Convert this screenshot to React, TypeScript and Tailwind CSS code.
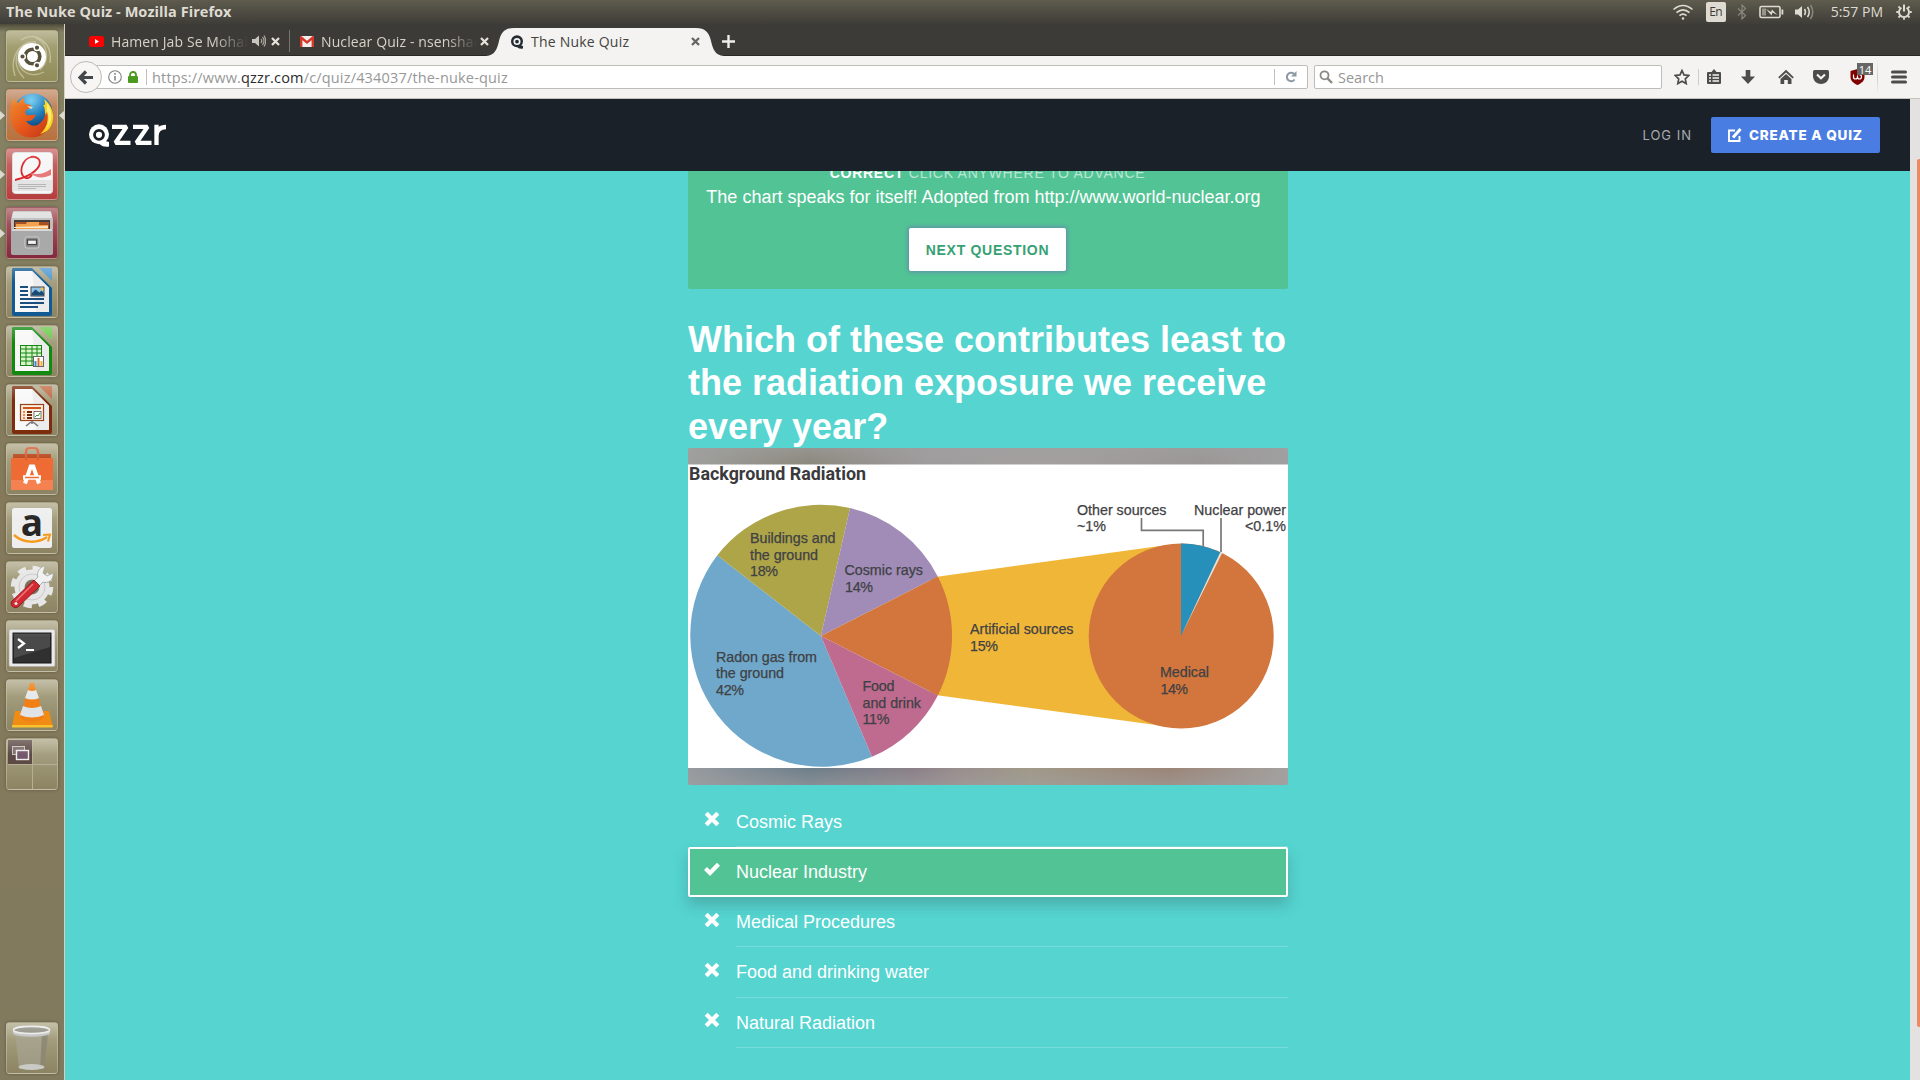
import React, { ReactNode } from "react";

const UI = "font-['Open_Sans','Noto_Sans',sans-serif]";

/* ---------- Launcher ---------- */

function Tile({ tint, children }: { tint: string; children: ReactNode }) {
  return (
    <div
      className={`relative h-[52px] w-[52px] shrink-0 overflow-hidden rounded-[4px] border border-white/25 shadow-[0_0_3px_rgba(50,45,25,0.45)] ${tint}`}
    >
      <svg viewBox="0 0 52 52" className="-m-px h-[52px] w-[52px]">
        {children}
      </svg>
      <div className="absolute inset-x-0 top-0 h-4 bg-linear-to-b from-white/25 to-transparent" />
    </div>
  );
}

function LibreDoc({ dark, light, children }: { dark: string; light: string; children: ReactNode }) {
  return (
    <>
      <path d="M7 2h19l20 20v26a2 2 0 0 1-2 2H8a2 2 0 0 1-2-2V3z" fill={dark} />
      <path d="M9 5h17l17 17v24H9z" fill="#f8f8f8" />
      <path d="M26 5l17 17V46H30z" fill="#ececec" />
      <path d="M33 2h13v13z" fill={light} />
      {children}
    </>
  );
}

const GLASS = "bg-linear-to-b from-[#b0aa8b] to-[#8b8361]";

function Launcher() {
  return (
    <aside className="relative flex w-[65px] shrink-0 flex-col gap-[7px] border-r border-[#d8d2bd] bg-linear-to-b from-[#858365] via-[#84795a] to-[#817a5e] pt-[6px] pb-[6px] pl-[6px]">
      <div className="absolute inset-x-0 top-0 h-2 bg-linear-to-b from-[#4d4a39] to-transparent" />
      <Tile tint="bg-linear-to-b from-[#aaa67c] to-[#918c58]">
        <g fill="none" stroke="#d2cfb0" strokeWidth="1.3" opacity=".7">
          <path d="M9 46C3 27 14 10 30 12" />
          <path d="M15 10c16-10 32 4 29 23" />
          <path d="M18 48C6 36 8 20 22 13" />
          <path d="M38 42c-14 7-26-1-26-14" />
          <path d="M30 8c11 5 15 22 4 32" />
        </g>
        <circle cx="26" cy="27" r="14" fill="#fff" />
        <circle cx="26.5" cy="26.5" r="7.3" fill="none" stroke="#57533b" strokeWidth="3.6" />
        <g fill="#57533b" stroke="#fff" strokeWidth="1.4">
          <circle cx="16.5" cy="26.5" r="2.8" />
          <circle cx="31" cy="17.7" r="2.8" />
          <circle cx="31" cy="35.3" r="2.8" />
        </g>
      </Tile>
      <Tile tint="bg-linear-to-b from-[#c3906c] to-[#b8713d]">
        <defs>
          <radialGradient id="globe" cx=".45" cy=".2" r=".8">
            <stop offset="0" stopColor="#6fcdf2" />
            <stop offset=".5" stopColor="#1f79b8" />
            <stop offset="1" stopColor="#0b2e5e" />
          </radialGradient>
          <linearGradient id="fox" x1="0" y1="0" x2="1" y2="1">
            <stop offset="0" stopColor="#ef8a2a" />
            <stop offset=".5" stopColor="#e65a1c" />
            <stop offset="1" stopColor="#c33316" />
          </linearGradient>
        </defs>
        <circle cx="27" cy="24" r="19.5" fill="url(#globe)" />
        <path
          d="M7 10l5 4c2-3 5-5 6-5 0 3 0 5 2 6l5 1-1 3-4 2c-1 2-1 4 1 5 3 1 6-1 9 0l-2 3c-2 3-5 3-8 3 3 5 9 6 13 3 6-4 7-11 6-17 8 9 7 21-2 27-9 6-22 4-28-4C2 32 4 19 7 10z"
          fill="url(#fox)"
        />
        <path d="M38 10c8 6 12 17 7 27-3 5-7 7-11 8 7-6 9-14 7-23l-1 4c-2-3 0-6-3-10 3 1 2-3 1-6z" fill="#fbd41c" />
        <path d="M41 14c6 8 6 19-1 26 4-9 3-13 1-17z" fill="#fff3a0" opacity=".7" />
        <path d="M21 17l6 1-2 2z" fill="#fbe0c0" />
      </Tile>
      <Tile tint="bg-linear-to-b from-[#c96e6c] to-[#b53e3e]">
        <rect x="6.5" y="4.5" width="40" height="41" rx="3" fill="#f6f6f6" stroke="#ddd" />
        <path d="M7 32h39v11H7z" fill="#e4e4e4" />
        <path d="M9 32c6-1 20-6 24-14 3-7-3-10-8-9-8 2-12 13-8 19 3 4 7 2 9-1" fill="none" stroke="#d9292c" strokeWidth="1.800" />
        <path d="M24 25c8 2 14 1 21-4v6c-8 4-15 3-21-2z" fill="#e77b7b" />
        <path d="M12 36.500h28M12 38.500h28M12 40.500h18" stroke="#aaa" strokeWidth=".8" />
      </Tile>
      <Tile tint="bg-linear-to-b from-[#ad6066] to-[#84283c]">
        <path d="M7 5q0-1 1-1h36q1 0 1 1l2 7v35H5V12z" fill="#bdbdbd" />
        <path d="M7 5h38l1 6H6z" fill="#dedede" />
        <rect x="8" y="13" width="36" height="10" fill="#3b3431" />
        <path d="M9 15h34v8H9z" fill="#a94f22" />
        <path d="M10 17h10l1-2h12v7H10zM12 18h30v4H10z" fill="#f2a14c" />
        <path d="M8 20l34-1v2H8z" fill="#fbe6c6" />
        <path d="M5 22h42v24q0 2-2 2H7q-2 0-2-2z" fill="#a9a9a9" />
        <path d="M6 22h40v2H6z" fill="#d8d8d8" />
        <rect x="19" y="30" width="14" height="11" rx="2" fill="#8b8b8b" stroke="#d0d0d0" />
        <rect x="21.500" y="33" width="9" height="4.500" fill="#f4f4f4" stroke="#444" strokeWidth="1.200" />
      </Tile>
      <Tile tint={GLASS}>
        <LibreDoc dark="#115a93" light="#4f98cf">
          <path d="M14 21h8M14 25h8M14 29h8M14 33h24M14 37h24M14 41h18" stroke="#1a4f80" strokeWidth="2" />
          <rect x="25" y="21" width="13" height="9" fill="#8fc3ea" stroke="#444" />
          <path d="M25.500 29.500v-2l4-4 4 3 2-2 2.500 3v2z" fill="#1b4a70" />
          <circle cx="36" cy="23" r="1.600" fill="#f5c542" />
        </LibreDoc>
      </Tile>
      <Tile tint={GLASS}>
        <LibreDoc dark="#128a12" light="#6acb4c">
          <rect x="14.500" y="20.500" width="21" height="20" fill="#d7f5c7" stroke="#158515" />
          <path d="M14 24h22M14 28h22M14 32h22M14 36h22M20 20v21M26 20v21M31 20v21" stroke="#158515" />
          <rect x="27.500" y="31.500" width="10" height="10" fill="#fff" stroke="#666" />
          <path d="M28.500 36h2v5h-2z" fill="#338ad0" />
          <path d="M31.500 33h2v8h-2z" fill="#e2632a" />
          <path d="M34.500 36h2v5h-2z" fill="#e8b52c" />
        </LibreDoc>
      </Tile>
      <Tile tint={GLASS}>
        <LibreDoc dark="#7d2d0c" light="#c16a45">
          <rect x="14.500" y="20.500" width="23" height="16" fill="#fdeee0" stroke="#94431b" strokeWidth="1.200" />
          <path d="M17 24h18" stroke="#d0571b" strokeWidth="2" />
          <path d="M17 28h2M17 31h2M17 34h2" stroke="#e98a4e" strokeWidth="1.800" />
          <path d="M21 28h5M21 31h5M21 34h5" stroke="#6d2a0d" strokeWidth="1.800" />
          <rect x="28" y="27.500" width="7" height="7" fill="#fff" stroke="#555" strokeWidth=".8" />
          <path d="M29 33l2-2 1 1 2-3" stroke="#2c9b3a" fill="none" />
          <path d="M26 37v3M25 38l-5 4M27 38l5 4" stroke="#777" strokeWidth="1.600" />
        </LibreDoc>
      </Tile>
      <Tile tint={GLASS}>
        <path d="M7 11h38v6H7z" fill="#b7491f" />
        <path d="M5 15h42v31q0 1-1 1H6q-1 0-1-1z" fill="#ee6c34" />
        <path d="M5 37h42v10H5z" fill="#f58150" />
        <path d="M20 17V9q0-4 4-4h4q4 0 4 4v8" fill="none" stroke="#d95c2e" strokeWidth="2.200" />
        <path d="M19 40.500l5.700-17h2.600l5.700 17" fill="none" stroke="#fff" strokeWidth="4" />
        <path d="M17 34.500h18" stroke="#fff" strokeWidth="4.500" />
        <path d="M19 34.500h14" stroke="#ee6c34" strokeWidth="1.400" />
      </Tile>
      <Tile tint={GLASS}>
        <rect x="6" y="6" width="40" height="40" rx="2.500" fill="#eeeeee" />
        <text x="26" y="33.500" textAnchor="middle" fontSize="37" fontWeight="700" fontFamily="Open Sans, sans-serif" fill="#262626">
          a
        </text>
        <path d="M8 33c9 8 23 9 33 2" fill="none" stroke="#f79a1c" strokeWidth="2.400" />
        <path d="M37 33l7-.5-2 7" fill="none" stroke="#f79a1c" strokeWidth="2" />
      </Tile>
      <Tile tint={GLASS}>
        <circle cx="26" cy="26" r="17.500" fill="none" stroke="#e6e6e6" strokeWidth="7.500" strokeDasharray="7.500 6.245" />
        <circle cx="26" cy="26" r="12.500" fill="none" stroke="#e6e6e6" strokeWidth="10" />
        <circle cx="26" cy="26" r="13" fill="none" stroke="#c9c9c9" />
        <circle cx="26" cy="26" r="7" fill="#77715f" />
        <path d="M27 21l5-5c-2-5 2-10 7-11l-2 7 4 3 6-3c1 7-5 11-10 9l-5 5z" fill="#f1f1f1" stroke="#9c9c9c" strokeWidth=".8" />
        <path d="M28 19l6 6-22 21q-3 2-6-1-2-3 0-5z" fill="#d22a33" stroke="#8c1319" strokeWidth=".8" />
        <path d="M27 23L10 40" stroke="#f0747a" strokeWidth="1.600" />
        <circle cx="10" cy="42.500" r="1.500" fill="#eee" />
      </Tile>
      <Tile tint={GLASS}>
        <rect x="3" y="9.500" width="46" height="37" rx="1.500" fill="#e9e9e9" stroke="#aaa" strokeWidth=".6" />
        <rect x="7" y="13" width="38" height="30" fill="#303030" stroke="#141414" />
        <path d="M8 14h36v13L8 38z" fill="#4a4a4a" />
        <path d="M12 19l6 4.500-6 4.500" fill="none" stroke="#fff" strokeWidth="2.200" />
        <path d="M20 30h8" stroke="#fff" strokeWidth="2" />
      </Tile>
      <Tile tint={GLASS}>
        <path d="M9 32h34l4 16H6z" fill="#f08b14" />
        <path d="M6 46h41l-.5 2.500H6z" fill="#f9c22c" />
        <path d="M24 4h4l10 34c-3 6-21 6-24 0z" fill="#f07f16" />
        <path d="M22 11q4 2 8 0l3 8q-7 3-14 0z" fill="#e6e9ec" />
        <path d="M17 27q9 4 18 0l3 9q-12 5-24 0z" fill="#dfe3e7" />
      </Tile>
      <Tile tint={GLASS}>
        <rect x="2" y="2" width="24" height="24" fill="#5d4a45" />
        <path d="M26.500 2v49M2 26.500h49" stroke="#b5af98" />
        <rect x="6.500" y="8.500" width="12" height="8" fill="#7a6b6b" stroke="#c9c2bd" />
        <rect x="10.500" y="12.500" width="12" height="9" fill="#75576b" stroke="#eee" strokeWidth="1.400" />
      </Tile>
      <div className="mt-auto">
        <Tile tint={GLASS}>
          <path d="M9 10h33l-4 36q-13 3-25 0z" fill="#a9a797" opacity=".6" />
          <path d="M36 12h6l-4 34-4 1z" fill="#77745f" opacity=".5" />
          <ellipse cx="25.500" cy="45" rx="13" ry="3" fill="#c9c9c6" />
          <path d="M7 8v3c0 5 37 5 37 0V8z" fill="#c4c4c4" />
          <ellipse cx="25.500" cy="8" rx="18" ry="3.600" fill="#918f84" stroke="#e9e9e9" strokeWidth="1.600" />
        </Tile>
      </div>
      <svg className="absolute inset-0 h-full w-[65px]" viewBox="0 0 65 1056">
        <path d="M0 87l5 4.500-5 4.500zM0 146l5 4.500-5 4.500zM0 205l5 4.500-5 4.500zM64 87l-5 4.500 5 4.500z" fill="#dcdad0" />
      </svg>
    </aside>
  );
}

/* ---------- System bar ---------- */

function SystemBar() {
  return (
    <header
      className={`flex h-6 shrink-0 items-center justify-between bg-linear-to-b from-[#5f5b4e] to-[#3e3d38] pr-2 pl-[6px] text-[#dfdbd2] ${UI}`}
    >
      <span className="text-[14.500px] leading-6 font-bold tracking-[0.06px]">The Nuke Quiz - Mozilla Firefox</span>
      <div className="flex h-6 items-center">
        <svg className="mr-[12px] h-[18px] w-[22px]" viewBox="0 0 22 18" fill="none" stroke="#dfdbd2" strokeWidth="1.600">
          <path d="M1.500 6.500q9.500-8 19 0M4.500 9.700q6.500-5.500 13 0M7.500 12.700q3.500-3 7 0" />
          <circle cx="11" cy="15.500" r="1.200" fill="#dfdbd2" stroke="none" />
        </svg>
        <span className="mr-[11px] flex h-5 w-5 items-center justify-center rounded-[2px] bg-[#dfdbd2] text-[12px] font-medium tracking-[-0.5px] text-[#3c3b37]">
          En
        </span>
        <svg className="mr-[12px] h-4 w-[10px]" viewBox="0 0 10 16" fill="none" stroke="#8a877f" strokeWidth="1.200">
          <path d="M1 4.500l7.500 7L5 15V1l3.500 3.500L1 11.500" />
        </svg>
        <svg className="mr-[11px] h-[14px] w-[25px]" viewBox="0 0 25 14">
          <rect x="1" y="1.500" width="20" height="11" rx="1.500" fill="none" stroke="#dfdbd2" strokeWidth="1.600" />
          <rect x="22.500" y="4.500" width="1.800" height="5" fill="#dfdbd2" />
          <rect x="3" y="3.500" width="4" height="7" fill="#98958c" />
          <path d="M7 4l5 3 1-2.500L18.500 10l-5-2.500-1 3z" fill="#dfdbd2" />
        </svg>
        <svg className="mr-[16px] h-4 w-[20px]" viewBox="0 0 20 16" fill="none" stroke="#dfdbd2" strokeWidth="1.500">
          <path d="M0 5.500h3l4-3.500v12l-4-3.500H0z" fill="#dfdbd2" stroke="none" />
          <path d="M9.500 5q2 3 0 6M12.500 3q3.500 5 0 10" />
          <path d="M15.500 1q4.500 7 0 14" stroke="#8a877f" />
        </svg>
        <span className="mr-[13px] text-[14px] leading-6">5:57 PM</span>
        <svg className="h-4 w-4" viewBox="0 0 16 16" fill="none" stroke="#dfdbd2">
          <path d="M5.500 3.800a5 5 0 1 0 5 0" strokeWidth="1.900" />
          <path d="M8 .5v7" strokeWidth="2" />
          <path d="M.3 8h2M13.700 8h2M8 13.500v2.200M2.500 2.500l1.600 1.600M13.500 2.500l-1.600 1.600M2.500 13.500l1.600-1.600M13.500 13.500l-1.600-1.600" strokeWidth="1.800" />
        </svg>
      </div>
    </header>
  );
}

/* ---------- Tabs ---------- */

function CloseX({ color }: { color: string }) {
  return (
    <svg className="h-[9px] w-[9px] shrink-0" viewBox="0 0 9 9">
      <path d="M1 1l7 7M8 1L1 8" stroke={color} strokeWidth="2.300" />
    </svg>
  );
}

function QMark({ className, color, hole }: { className: string; color: string; hole: string }) {
  return (
    <svg className={className} viewBox="0 0 20 23">
      <circle cx="10" cy="10.300" r="10" fill={color} />
      <path d="M9 15l11 3v4.500q-6 .8-9-2z" fill={color} />
      <circle cx="10" cy="10.800" r="4.500" fill="none" stroke={hole} strokeWidth="2.800" />
    </svg>
  );
}

function TabBar() {
  return (
    <div className={`flex h-8 shrink-0 items-center border-b border-[#2a2926] bg-[#3c3b37] pt-[3px] text-[14px] ${UI}`}>
      <div className="flex h-[22px] w-[225px] shrink-0 items-center border-r border-[#767570] pl-6 text-[#d6d2c8]">
        <svg className="mr-[7px] h-[11px] w-[15px] shrink-0" viewBox="0 0 15 11">
          <rect width="15" height="11" rx="2.500" fill="#f00" />
          <path d="M6 3l4 2.500L6 8z" fill="#fff" />
        </svg>
        <span className="w-[137px] shrink-0 overflow-hidden mask-r-from-75% tracking-[0.1px] whitespace-nowrap">Hamen Jab Se Mohabbat</span>
        <svg className="mr-[5px] ml-[4px] h-3 w-[14px] shrink-0" viewBox="0 0 14 12" fill="none" stroke="#c9c5bc" strokeWidth="1.200">
          <path d="M0 4h3l4-3.500v11L3 8H0z" fill="#c9c5bc" stroke="none" />
          <path d="M9 4q1.500 2 0 4M10.500 2q3 4 0 8M12 .5q3.500 5.500 0 11" opacity=".8" />
        </svg>
        <CloseX color="#e6e2da" />
      </div>
      <div className="flex w-[205px] shrink-0 items-center pl-[10px] text-[#d6d2c8]">
        <svg className="mr-[7px] h-[11px] w-[14px] shrink-0" viewBox="0 0 14 11">
          <rect width="14" height="11" rx="1" fill="#f2f0ec" />
          <path d="M1.200 11V1.500L7 6.500l5.800-5V11" fill="none" stroke="#d8382c" strokeWidth="2.400" />
        </svg>
        <span className="w-[156px] shrink-0 overflow-hidden mask-r-from-80% tracking-[0.1px] whitespace-nowrap">
          Nuclear Quiz - nsensharma
        </span>
        <span className="ml-[3px] flex">
          <CloseX color="#e6e2da" />
        </span>
      </div>
      <div className="relative -ml-[9px] flex h-[29px] w-[238px] shrink-0 items-center self-start text-[#44433f]">
        <svg className="absolute top-0 left-0 h-[29px] w-[238px]" viewBox="0 0 238 29">
          <path d="M0 29C9 28.500 11 22 13 14 15 5 19 1 28 1h182c9 0 13 4 15 13 2 8 4 14.500 13 15z" fill="#f4f3f1" />
        </svg>
        <div className="relative flex w-full items-center pl-[25px]">
          <QMark className="mr-[8px] h-[14px] w-3 shrink-0" color="#242b33" hole="#f4f3f1" />
          <span className="w-[160px] tracking-[0.22px]">The Nuke Quiz</span>
          <CloseX color="#66655f" />
        </div>
      </div>
      <svg className="-ml-[2px] h-[13px] w-[13px]" viewBox="0 0 13 13">
        <path d="M6.500 0v13M0 6.500h13" stroke="#f0eee9" strokeWidth="2.400" />
      </svg>
    </div>
  );
}

/* ---------- Toolbar ---------- */

function ToolIcon({ className, children }: { className: string; children: ReactNode }) {
  return (
    <span className={`flex h-full shrink-0 items-center justify-center ${className}`}>
      <svg className="h-4 w-4" viewBox="0 0 16 16" fill="#4c4c4c">
        {children}
      </svg>
    </span>
  );
}

function Toolbar() {
  return (
    <div className={`flex h-[43px] shrink-0 items-center border-b border-[#c6c3bd] bg-[#f4f3f1] pl-[5px] ${UI}`}>
      <div className="relative z-10 flex h-8 w-8 shrink-0 items-center justify-center rounded-full border border-[#bdbab5] bg-[#f7f6f5]">
        <svg className="h-[15px] w-[16px]" viewBox="0 0 16 15">
          <path d="M8 1.500L2 7.500l6 6M2.500 7.500H15" fill="none" stroke="#45484b" strokeWidth="3.200" />
        </svg>
      </div>
      <div className="-ml-[6px] flex h-6 w-[1212px] shrink-0 items-center rounded-r-[2px] border border-[#bfbdb9] bg-white pl-[11px]">
        <svg className="h-[14px] w-[14px]" viewBox="0 0 14 14">
          <circle cx="7" cy="7" r="6.300" fill="none" stroke="#80807e" strokeWidth="1.100" />
          <path d="M7 6v4.500M7 3v1.700" stroke="#80807e" strokeWidth="1.500" />
        </svg>
        <svg className="ml-[6px] h-3 w-[10px]" viewBox="0 0 10 12">
          <rect y="5" width="10" height="7" rx="1" fill="#4a9a20" />
          <path d="M2 6V4a3 3 0 0 1 6 0v2" fill="none" stroke="#4a9a20" strokeWidth="1.800" />
        </svg>
        <span className="ml-2 h-4 w-px bg-[#c2c0bc]" />
        <span className="mt-px ml-[5px] text-[14.500px] tracking-[0.170px] text-[#979797]">
          https://www.<span className="text-[#2c2c2c]">qzzr.com</span>/c/quiz/434037/the-nuke-quiz
        </span>
        <span className="ml-auto h-4 w-px bg-[#c2c0bc]" />
        <svg className="mr-[10px] ml-[10px] h-3 w-3" viewBox="0 0 12 12">
          <path d="M9.500 8.500A4.200 4.200 0 1 1 9 3" fill="none" stroke="#8c98a3" strokeWidth="2" />
          <path d="M11.500 0v5.500H6z" fill="#8c98a3" />
        </svg>
      </div>
      <div className="ml-[6px] flex h-6 w-[348px] shrink-0 items-center rounded-[2px] border border-[#bfbdb9] bg-white pl-1 text-[14.500px] text-[#969696]">
        <svg className="mr-[5px] h-[14px] w-[14px]" viewBox="0 0 14 14" fill="none" stroke="#8a8a88">
          <circle cx="5.500" cy="5.300" r="4" strokeWidth="1.800" />
          <path d="M8.500 8.300l4.500 4.700" strokeWidth="2.400" />
        </svg>
        <span className="mt-px">Search</span>
      </div>
      <ToolIcon className="ml-[4px] w-[32px]">
        <path d="M8 1.500l2 4.400 4.800.6-3.500 3.300.9 4.800L8 12.200l-4.200 2.400.9-4.800L1.200 6.500 6 5.900z" fill="none" stroke="#4c4c4c" strokeWidth="1.700" />
      </ToolIcon>
      <span className="h-4 w-px shrink-0 bg-[#cfcdc9]" />
      <ToolIcon className="w-[29px]">
        <path d="M2 3h3.500l2.500-3 2.500 3H14q1 0 1 1v10q0 1-1 1H2q-1 0-1-1V4q0-1 1-1z" />
        <path d="M3 6h2M3 9h2M3 12h2M6.500 6H13M6.500 9H13M6.500 12H13" stroke="#f4f3f1" strokeWidth="1.500" />
      </ToolIcon>
      <ToolIcon className="w-[40px]">
        <path d="M5.700 1h4.600v6.500H15L8 15 1 7.500h4.700z" />
      </ToolIcon>
      <ToolIcon className="w-[35px]">
        <path d="M8 .8l7.800 7.400-1.200 1.300L8 3.500 1.400 9.500.2 8.200z" />
        <path d="M8 5l5.500 5v5H9.800v-4H6.200v4H2.500v-5z" />
      </ToolIcon>
      <ToolIcon className="w-[36px]">
        <path d="M1.500 1h13Q16 1 16 2.500V7c0 5-4 8-8 8S0 12 0 7V2.500Q0 1 1.500 1z" />
        <path d="M4 5.500L8 9.300l4-3.800" fill="none" stroke="#f4f3f1" strokeWidth="2.200" />
      </ToolIcon>
      <span className="relative flex h-full w-[36px] shrink-0 items-center justify-center">
        <svg className="h-4 w-[15px]" viewBox="0 0 15 16">
          <path d="M7.500 0L14.500 2v6c0 4-3.500 6.500-7 8C4 14.500.5 12 .5 8V2z" fill="#800000" />
          <path d="M3.500 5.500v2.500q0 2 2 2t2-2V6.500M7.500 8q0 2 2 2t2-2.200-2-2.200" fill="none" stroke="#fff" strokeWidth="1.200" />
        </svg>
        <span className="absolute top-[7px] left-[18px] flex h-3 w-4 items-center justify-center bg-[#666] text-[11px] leading-none text-white">
          14
        </span>
      </span>
      <span className="ml-[2px] h-9 w-px shrink-0 bg-linear-to-b from-transparent via-[#cfcdc9] to-transparent" />
      <ToolIcon className="w-[42px]">
        <path d="M1.500 3h13M1.500 8h13M1.500 13h13" stroke="#4c4c4c" strokeWidth="3" strokeLinecap="round" />
      </ToolIcon>
    </div>
  );
}

/* ---------- Page ---------- */

function SiteHeader() {
  return (
    <div className="relative z-10 flex h-[72px] shrink-0 items-center bg-[#1b2129] pr-[30px] pl-[24px] font-['Inter','Roboto',sans-serif]">
      <QMark className="h-[23px] w-5 shrink-0" color="#fff" hole="#1b2129" />
      <svg className="ml-[3px] h-[23px] w-[54px] shrink-0" viewBox="0 0 54 23" fill="none" stroke="#fff" strokeWidth="4.300">
        <path d="M0 2.900h14.500L3.500 18.800H18.500M21 2.900h14.500L24.500 18.800H39.500" strokeLinejoin="bevel" />
        <path d="M44.500 21V.8M44.500 12c0-6 4-9 9.500-9" />
      </svg>
      <span className="mt-[2px] ml-auto text-[13px] tracking-[1px] text-[#a8abaf]">LOG IN</span>
      <button className="ml-[19px] flex h-9 w-[169px] items-center rounded-[2px] bg-[#4a7de2] pl-[17px] text-[13.500px] font-extrabold tracking-[0.8px] text-white">
        <svg className="mr-[7px] h-[14px] w-[14px] shrink-0" viewBox="0 0 14 14" fill="none" stroke="#fff" strokeWidth="1.900">
          <path d="M7 2.500H1V13h10.500V8" />
          <path d="M5 9.500L12.500 1" strokeWidth="3" />
        </svg>
        <span className="mt-px whitespace-nowrap">CREATE A QUIZ</span>
      </button>
    </div>
  );
}

function RadiationChart() {
  return (
    <svg className="block h-[337px] w-[600px] rounded-[2px]" viewBox="688 448 600 337">
      <defs>
        <linearGradient id="topBand">
          <stop offset="0" stopColor="#9fa09d" />
          <stop offset=".2" stopColor="#8b877b" />
          <stop offset=".4" stopColor="#9f9c9e" />
          <stop offset=".6" stopColor="#a3a09e" />
          <stop offset=".85" stopColor="#9b9696" />
          <stop offset="1" stopColor="#a09f9f" />
        </linearGradient>
        <linearGradient id="bottomBand">
          <stop offset="0" stopColor="#979b9f" />
          <stop offset=".2" stopColor="#6d7e8a" />
          <stop offset=".38" stopColor="#8c8088" />
          <stop offset=".45" stopColor="#998e8d" />
          <stop offset=".57" stopColor="#a09a89" />
          <stop offset=".8" stopColor="#9b8477" />
          <stop offset="1" stopColor="#a3a19f" />
        </linearGradient>
        <linearGradient id="fadeDown" x1="0" y1="0" x2="0" y2="1">
          <stop offset="0" stopColor="#a0a0a0" stopOpacity=".55" />
          <stop offset="1" stopColor="#a0a0a0" stopOpacity="0" />
        </linearGradient>
        <linearGradient id="fadeUp" x1="0" y1="1" x2="0" y2="0">
          <stop offset="0" stopColor="#a0a0a0" stopOpacity=".5" />
          <stop offset="1" stopColor="#a0a0a0" stopOpacity="0" />
        </linearGradient>
      </defs>
      <rect x="688" y="448" width="600" height="17" fill="url(#topBand)" />
      <rect x="688" y="448" width="600" height="17" fill="url(#fadeDown)" />
      <rect x="688" y="768" width="600" height="17" fill="url(#bottomBand)" />
      <rect x="688" y="768" width="600" height="17" fill="url(#fadeUp)" />
      <rect x="688" y="464.500" width="600" height="303.500" fill="#fff" />
      <path d="M930 577.700L1160 546v179.500L930 694.300z" fill="#f0b637" />
      <path d="M820.900 636L872 756.700A131.500 131.500 0 0 1 717.300 555.300z" fill="#6fa8cb" />
      <path d="M820.900 636L717.300 555.300A131.500 131.500 0 0 1 850 508z" fill="#aea448" />
      <path d="M820.900 636L850 508A131.500 131.500 0 0 1 937.800 576.500z" fill="#a08cb6" />
      <path d="M820.900 636L937.800 576.500A131.500 131.500 0 0 1 937.800 695.500z" fill="#d2763d" />
      <path d="M820.900 636L937.800 695.500A131.500 131.500 0 0 1 872 756.700z" fill="#be6b8f" />
      <circle cx="1181.200" cy="636" r="92.500" fill="#d2763d" />
      <path d="M1181 636V543.500A92.500 92.500 0 0 1 1220.500 552.300z" fill="#268fba" />
      <path d="M1181.200 635.500L1220.300 552.200l1.900.9z" fill="#e6e3dc" />
      <path d="M1141.500 518v12.300h61.700V547M1221 518v34" fill="none" stroke="#77777a" strokeWidth="1.700" />
      <g fontFamily="Liberation Sans, Arial, sans-serif" fontSize="14.300" fill="#3f4144" stroke="#3f4144" strokeWidth=".25">
        <text x="689" y="480" fontFamily="Roboto, sans-serif" fontSize="18.500" fontWeight="700" fill="#3a3a3d" stroke="none" textLength="177" lengthAdjust="spacingAndGlyphs">
          Background Radiation
        </text>
        <text x="750" y="543" textLength="85.500">Buildings and</text>
        <text x="750" y="559.500" textLength="68">the ground</text>
        <text x="750" y="576" textLength="28">18%</text>
        <text x="844.500" y="575" textLength="78.500">Cosmic rays</text>
        <text x="845" y="591.500" textLength="28">14%</text>
        <text x="716" y="661.500" textLength="101">Radon gas from</text>
        <text x="716" y="678" textLength="68">the ground</text>
        <text x="716" y="694.500" textLength="28">42%</text>
        <text x="862.500" y="691" textLength="32">Food</text>
        <text x="862.500" y="707.500" textLength="58.500">and drink</text>
        <text x="862.500" y="724" textLength="27">11%</text>
        <text x="970" y="634" textLength="103.500">Artificial sources</text>
        <text x="970" y="650.500" textLength="28">15%</text>
        <text x="1077" y="514.500" textLength="89.500">Other sources</text>
        <text x="1077" y="531" textLength="29">~1%</text>
        <text x="1194" y="514.500" textLength="92">Nuclear power</text>
        <text x="1245" y="531" textLength="41">&lt;0.1%</text>
        <text x="1160" y="677" textLength="49">Medical</text>
        <text x="1160.500" y="693.500" textLength="27.500">14%</text>
      </g>
    </svg>
  );
}

const ANSWERS = ["Cosmic Rays", "Nuclear Industry", "Medical Procedures", "Food and drinking water", "Natural Radiation"];

function AnswerMark({ correct }: { correct: boolean }) {
  return (
    <svg className="-mt-[5px] h-4 w-4 shrink-0" viewBox="0 0 16 16" fill="none" stroke="#fff" strokeWidth="4.200">
      {correct ? <path d="M1.500 7.500l4.500 4.500L14.500 3.300" /> : <path d="M2.200 2.200l11.600 11.600M13.800 2.200L2.200 13.800" />}
    </svg>
  );
}

function Answer({ label, correct }: { label: string; correct: boolean }) {
  return (
    <li
      className={
        correct
          ? "relative z-10 flex h-[50px] items-center rounded-[2px] border-2 border-white bg-[#52c394] pl-[14px] shadow-[0_8px_14px_rgba(50,90,90,0.3)]"
          : "flex h-[50.300px] items-center pl-4"
      }
    >
      <AnswerMark correct={correct} />
      <span
        className={
          correct
            ? "ml-4 pt-[2px] pl-[0.500px] text-[18px] leading-[27px]"
            : "ml-4 flex h-full flex-1 items-center border-b border-white/20 pt-[2px] pl-[0.500px] text-[18px] leading-[27px]"
        }
      >
        {label}
      </span>
    </li>
  );
}

function QuizPage() {
  return (
    <div className="flex min-h-0 flex-1 flex-col items-center overflow-hidden bg-[#55d4d0] font-['Liberation_Sans',Arial,sans-serif] text-white">
      <section className="-mt-[10px] flex h-[128px] w-[600px] shrink-0 flex-col items-center rounded-b-[2px] bg-[#52c394]">
        <p className="mt-[2px] text-[14px] leading-5 tracking-[0.750px] text-white/60">
          <b className="text-white">CORRECT</b> CLICK ANYWHERE TO ADVANCE
        </p>
        <p className="mt-px pr-2 text-[18px] leading-[27px] whitespace-nowrap">
          The chart speaks for itself! Adopted from http://www.world-nuclear.org
        </p>
        <button className="mt-[17px] h-[43px] w-[157px] rounded-[2px] bg-white pt-px text-[14px] font-bold tracking-[0.7px] text-[#36a173] shadow-[0_0_4px_1px_rgba(110,100,190,0.6)]">
          NEXT QUESTION
        </button>
      </section>
      <h1 className="mt-[29px] h-[130.500px] w-[600px] shrink-0 pl-[0.500px] text-[36px] leading-[43.400px] font-bold whitespace-nowrap">
        Which of these contributes least to
        <br />
        the radiation exposure we receive
        <br />
        every year?
      </h1>
      <div className="mt-[-0.500px] shrink-0">
        <RadiationChart />
      </div>
      <ul className="mt-[11.700px] w-[600px] shrink-0">
        {ANSWERS.map((label, i) => (
          <Answer key={label} label={label} correct={i === 1} />
        ))}
      </ul>
    </div>
  );
}

export default function App() {
  return (
    <div className="flex h-[1080px] w-[1920px] flex-col overflow-hidden">
      <SystemBar />
      <div className="flex min-h-0 flex-1">
        <Launcher />
        <div className="flex min-w-0 flex-1 flex-col">
          <TabBar />
          <Toolbar />
          <div className="flex min-h-0 flex-1">
            <main className="flex min-w-0 flex-1 flex-col">
              <SiteHeader />
              <QuizPage />
            </main>
            <div className="w-[10px] shrink-0 bg-[#e4e2e0] pt-[60px] pl-[7px]">
              <div className="h-[868px] w-[3px] rounded-l-[2px] bg-[#ee8a62]" />
            </div>
          </div>
        </div>
      </div>
    </div>
  );
}
